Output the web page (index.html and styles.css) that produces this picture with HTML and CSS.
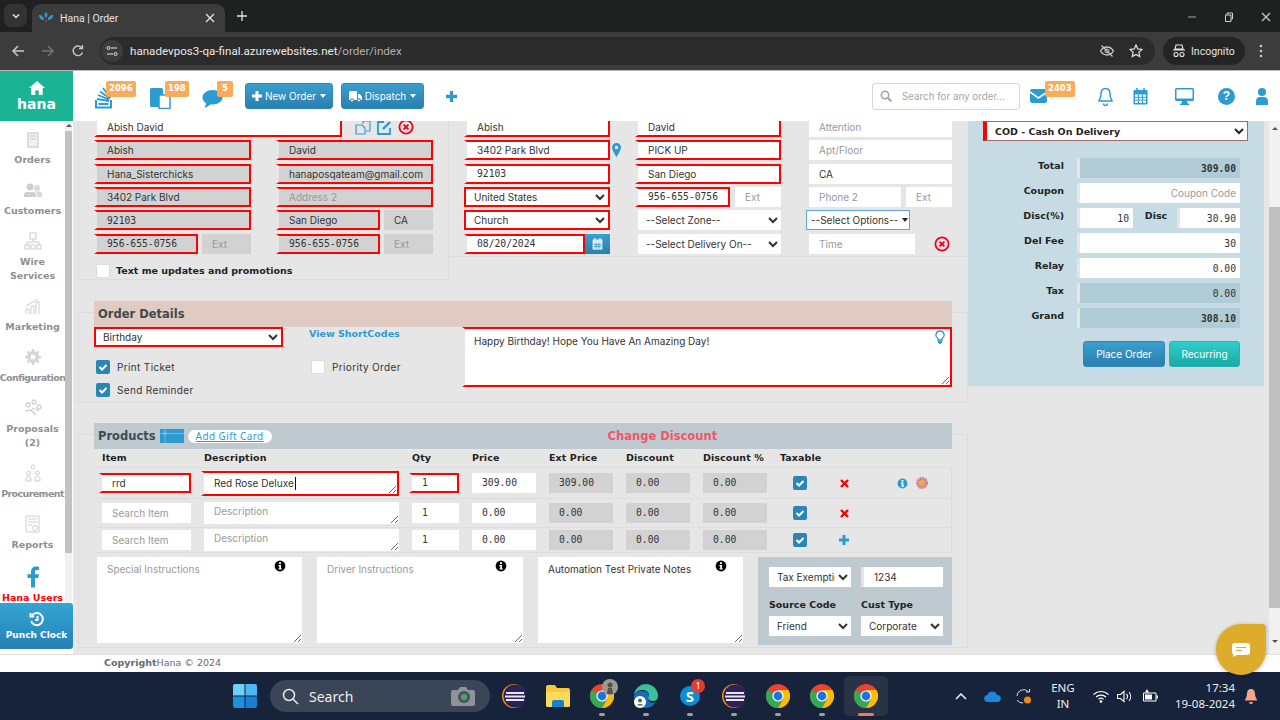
FILE: index.html
```html
<!DOCTYPE html>
<html lang="en">
<head>
<meta charset="UTF-8">
<meta name="viewport" content="width=device-width, initial-scale=1.0">
<title>Hana | Order</title>
<link rel="stylesheet" href="styles.css">
</head>
<body>

<svg class="defs" width="0" height="0">
    <symbol id="chrome" viewBox="0 0 24 24">
        <circle cx="12" cy="12" r="12" fill="#ea4335"/>
        <path d="M12 12 1.6 6A12 12 0 0 0 12 24l5.2-9z" fill="#34a853"/>
        <path d="M12 6h10.4A12 12 0 0 1 12 24l5.2-9z" fill="#fbbc04"/>
        <circle cx="12" cy="12" r="5.6" fill="#fff"/>
        <circle cx="12" cy="12" r="4.4" fill="#1a73e8"/>
    </symbol>
    <symbol id="eclipse" viewBox="0 0 24 24">
        <circle cx="12" cy="12" r="12" fill="#f7941e"/>
        <circle cx="13" cy="12" r="11.5" fill="#2c2255"/>
        <path d="M4 8h18v2H4zM3 11.5h20v2H3zM4 15h18v2H4z" fill="#e8e6f0"/>
    </symbol>
    <symbol id="redx" viewBox="0 0 16 16">
        <circle cx="8" cy="8" r="6.6" fill="none" stroke="#f0001e" stroke-width="1.8"/>
        <path d="m5.6 5.6 4.8 4.8m0-4.8-4.8 4.8" stroke="#f0001e" stroke-width="2"/>
    </symbol>
    <symbol id="tick" viewBox="0 0 14 14">
        <rect width="14" height="14" rx="2" fill="#2a86b6"/>
        <path d="m3.5 7 2.5 2.5 4.5-4.5" fill="none" stroke="#fff" stroke-width="2"/>
    </symbol>
    <symbol id="info" viewBox="0 0 12 12">
        <circle cx="6" cy="6" r="5.4"/>
        <path d="M5 2.2h2v1.8H5zM4.4 5h2.6v3.4h.8v1.2H4.4V8.4h.9V6.2h-.9z" fill="#fff"/>
    </symbol>
</svg>

<div class="tabstrip">
    <div class="tab-search"><svg width="10" height="10" viewBox="0 0 10 10"><path d="m2 3.5 3 3 3-3" fill="none" stroke="#e3e3e3" stroke-width="1.5"/></svg></div>
    <div class="tab">
        <svg width="14" height="12" viewBox="0 0 14 12"><path d="M7 0c2 2 2 4 0 6-2-2-2-4 0-6zM0 3c3 0 5 2 5 5-3 0-5-2-5-5zM14 3c-3 0-5 2-5 5 3 0 5-2 5-5z" fill="#2e9bd0"/><path d="M6 8h2l-1 3z" fill="#d43a3a"/></svg>
        <span class="tab-title">Hana | Order</span>
        <svg width="10" height="10" viewBox="0 0 10 10"><path d="m1 1 8 8m0-8-8 8" stroke="#e3e3e3" stroke-width="1.3"/></svg>
    </div>
    <svg class="tab-new" width="12" height="12" viewBox="0 0 12 12"><path d="M6 1v10M1 6h10" stroke="#e3e3e3" stroke-width="1.3"/></svg>
    <div class="win-btns">
        <svg width="10" height="10" viewBox="0 0 10 10"><path d="M1 5h8" stroke="#8f8f8f" stroke-width="1.2"/></svg>
        <svg width="10" height="10" viewBox="0 0 10 10"><path d="M1.5 3h5.5v6.500H1.500zM3 3V1h5.500v6H7" fill="none" stroke="#cfcfcf"/></svg>
        <svg width="10" height="10" viewBox="0 0 10 10"><path d="m1 1 8 8m0-8-8 8" stroke="#cfcfcf" stroke-width="1.100"/></svg>
    </div>
</div>

<div class="toolbar">
    <svg class="tool" width="14" height="14" viewBox="0 0 14 14"><path d="M13 7H2m5-5L2 7l5 5" fill="none" stroke="#c7c7c7" stroke-width="1.500"/></svg>
    <svg class="tool" width="14" height="14" viewBox="0 0 14 14"><path d="M1 7h11M7 2l5 5-5 5" fill="none" stroke="#757575" stroke-width="1.500"/></svg>
    <svg class="tool" width="14" height="14" viewBox="0 0 14 14"><path d="M11.500 8.500A4.800 4.800 0 1 1 10.500 3.500M11.500 1v3.500H8" fill="none" stroke="#c7c7c7" stroke-width="1.400"/></svg>
    <div class="omnibox">
        <span class="site-info"><svg width="12" height="12" viewBox="0 0 12 12"><path d="M5 3h6M1 9h6" stroke="#e3e3e3"/><circle cx="2.500" cy="3" r="1.500" fill="none" stroke="#e3e3e3"/><circle cx="9.500" cy="9" r="1.500" fill="none" stroke="#e3e3e3"/></svg></span>
        <span class="url">hanadevpos3-qa-final.azurewebsites.net<span class="url-path">/order/index</span></span>
        <svg class="omni-icon" width="16" height="16" viewBox="0 0 16 16"><path d="M1.500 8S4 4 8 4s6.500 4 6.500 4-2.500 4-6.500 4-6.500-4-6.500-4zM2.500 2.500l11 11" fill="none" stroke="#c7c7c7" stroke-width="1.300"/><circle cx="8" cy="8" r="2" fill="none" stroke="#c7c7c7"/></svg>
        <svg class="omni-icon" width="14" height="14" viewBox="0 0 14 14"><path d="m7 1 1.800 3.900 4.200.5-3.100 2.900.8 4.200L7 10.400 3.300 12.500l.8-4.200L1 5.400l4.200-.5z" fill="none" stroke="#e3e3e3" stroke-width="1.200"/></svg>
    </div>
    <div class="incognito">
        <svg width="14" height="14" viewBox="0 0 14 14"><path d="M4 1h6l1 4H3zM1 6h12" fill="none" stroke="#e3e3e3" stroke-width="1.100"/><circle cx="4" cy="10.500" r="2" fill="none" stroke="#e3e3e3" stroke-width="1.100"/><circle cx="10" cy="10.500" r="2" fill="none" stroke="#e3e3e3" stroke-width="1.100"/></svg>
        Incognito
    </div>
    <svg class="tool-menu" width="4" height="14" viewBox="0 0 4 14"><circle cx="2" cy="2" r="1.300" fill="#c7c7c7"/><circle cx="2" cy="7" r="1.300" fill="#c7c7c7"/><circle cx="2" cy="12" r="1.300" fill="#c7c7c7"/></svg>
</div>

<header class="topbar">
    <a class="logo">
        <svg width="16" height="14" viewBox="0 0 16 14"><path d="M8 0 0 7h2.300v7h4V9.500h3.400V14h4V7H16z" fill="#fff"/></svg>
        <span>hana</span>
    </a>
    <div class="top-left">
        <div class="top-icon w-stack">
            <svg width="19" height="24" viewBox="0 0 19 24"><path d="M1 15v7.500h15V15" fill="none" stroke="#2e9bd0" stroke-width="2"/><path d="M3.500 19h10" stroke="#2e9bd0" stroke-width="2"/><path d="m2 14 12 2M3 10l11 4.500M5 6.500l10 7M8 3l7.500 10" fill="none" stroke="#2e9bd0" stroke-width="1.800"/></svg>
            <span class="badge">2096</span>
        </div>
        <div class="top-icon w-docs">
            <svg width="21" height="22" viewBox="0 0 21 22"><rect x="0" y="1" width="13" height="19" rx="1.500" fill="#2e9bd0"/><rect x="9" y="8" width="11" height="13.500" fill="#fff" stroke="#2e9bd0" stroke-width="1.500"/></svg>
            <span class="badge">198</span>
        </div>
        <div class="top-icon w-chat">
            <svg width="21" height="20" viewBox="0 0 21 20"><path d="M10.500 1C5 1 .5 4.300.5 8.500c0 2.400 1.500 4.500 3.800 5.900-.3 1.500-1.200 3-2.300 4 2.500-.2 4.800-1.500 6.300-3 .7.100 1.400.1 2.200.1 5.500 0 10-3.100 10-7S16 1 10.500 1z" fill="#2e9bd0"/></svg>
            <span class="badge">5</span>
        </div>
        <button class="btn-blue btn-new">
            <svg width="10" height="10" viewBox="0 0 10 10"><path d="M3.500 0h3v3.500H10v3H6.500V10h-3V6.500H0v-3h3.500z" fill="#fff"/></svg>
            New Order <i class="caret"></i>
        </button>
        <button class="btn-blue btn-dispatch">
            <svg width="13" height="11" viewBox="0 0 13 11"><path d="M0 1.500Q0 0 1.500 0H8v9H0zM9 3h2l2 3v3H9z" fill="#fff"/><circle cx="3" cy="9.300" r="1.600" fill="#fff" stroke="#2a86b6"/><circle cx="10" cy="9.300" r="1.600" fill="#fff" stroke="#2a86b6"/></svg>
            Dispatch <i class="caret"></i>
        </button>
        <svg class="top-plus" width="11" height="11" viewBox="0 0 10 10"><path d="M3.500 0h3v3.500H10v3H6.500V10h-3V6.500H0v-3h3.500z" fill="#2e9bd0"/></svg>
    </div>
    <div class="top-right">
        <div class="top-search">
            <svg width="12" height="12" viewBox="0 0 12 12"><circle cx="5" cy="5" r="3.700" fill="none" stroke="#a0a0a0" stroke-width="1.500"/><path d="m8 8 3.300 3.300" stroke="#a0a0a0" stroke-width="2"/></svg>
            <span>Search for any order...</span>
        </div>
        <div class="top-icon w-mail">
            <svg width="17" height="14" viewBox="0 0 17 14"><path d="M0 2 Q0 0 2 0H15Q17 0 17 2L8.500 8z" fill="#2e9bd0"/><path d="M0 4 8.500 10 17 4v8q0 2-2 2H2q-2 0-2-2z" fill="#2e9bd0"/></svg>
            <span class="badge">2403</span>
        </div>
        <svg class="i-bell" width="15" height="19" viewBox="0 0 15 19"><path d="M7.500 1.500C4.500 1.500 3 4 3 7c0 4-2 6-2 7h13c0-1-2-3-2-7 0-3-1.500-5.500-4.500-5.500z" fill="none" stroke="#2e9bd0" stroke-width="1.500"/><path d="M5.500 16.500a2 2 0 0 0 4 0" fill="none" stroke="#2e9bd0" stroke-width="1.500"/></svg>
        <svg class="i-cal" width="15" height="17" viewBox="0 0 15 17"><rect x=".5" y="2" width="14" height="14.500" rx="1" fill="#2e9bd0"/><path d="M2 6.500h11v8.500H2z" fill="#fff"/><path d="M5.500 6.500V15M9.500 6.500V15M2 9.300h11M2 12.100h11" stroke="#2e9bd0"/><path d="M4 0v3.500M11 0v3.500" stroke="#2e9bd0" stroke-width="1.500"/></svg>
        <svg class="i-mon" width="19" height="17" viewBox="0 0 19 17"><path d="M1.500 0h16Q19 0 19 1.500v10Q19 13 17.500 13H12l.5 2.500H14V17H5v-1.500h1.500L7 13H1.500Q0 13 0 11.500v-10Q0 0 1.500 0zM1.500 1.500v9h16v-9z" fill="#2e9bd0" fill-rule="evenodd"/></svg>
        <span class="i-help">?</span>
        <svg class="i-user" width="12" height="17" viewBox="0 0 12 17"><circle cx="6" cy="4" r="4" fill="#2e9bd0"/><path d="M0 17v-3.500Q0 9 4 9h4q4 0 4 4.500V17z" fill="#2e9bd0"/></svg>
    </div>
</header>

<div class="app">
    <aside class="sidebar">
        <nav class="side-nav">
            <a class="nav-item"><svg width="14" height="18" viewBox="0 0 14 18"><path d="M2 3h10v14H2z" fill="#f2f2f2" stroke="#d4d4d4" stroke-width="1.500"/><path d="M4 6h6M4 9h6" stroke="#d4d4d4" stroke-width="1.500"/></svg><span>Orders</span></a>
            <a class="nav-item"><svg width="18" height="14" viewBox="0 0 18 14"><circle cx="6" cy="4" r="3.500" fill="#cfcfcf"/><circle cx="13" cy="5" r="3" fill="#dadada"/><path d="M0 14v-2q0-3 3-3h6q3 0 3 3v2z" fill="#cfcfcf"/><path d="M13 14v-2q0-2-1.500-3.500H15q3 0 3 2.500v3z" fill="#dadada"/></svg><span>Customers</span></a>
            <a class="nav-item nav-two"><svg width="18" height="18" viewBox="0 0 18 18" fill="none" stroke="#cccccc"><rect x="6" y="1" width="6" height="6"/><path d="M9 7v3M3 13v-3h12v3"/><rect x="1" y="13" width="4" height="4"/><rect x="7" y="13" width="4" height="4"/><rect x="13" y="13" width="4" height="4"/></svg><span>Wire<br>Services</span></a>
            <a class="nav-item"><svg width="16" height="18" viewBox="0 0 16 18" fill="none" stroke="#cfcfcf"><path d="M1 17v-5h3v5M6 17V9h3v8M11 17V5h3v12M1 9l12-7"/></svg><span>Marketing</span></a>
            <a class="nav-item nav-tight"><svg width="16" height="18" viewBox="0 0 16 16"><path d="M7 0h2l.4 2.200 1.600.7L13 1.700 14.300 3 13 5l.7 1.600 2.300.4v2l-2.300.4L13 11l1.300 2-1.300 1.300-2-1.300-1.600.7L9 16H7l-.4-2.300L5 13l-2 1.300L1.700 13 3 11l-.7-1.600L0 9V7l2.300-.4L3 5 1.700 3 3 1.700l2 1.300 1.600-.7z" fill="#d6d6d6"/><circle cx="8" cy="8" r="2.500" fill="#fff"/></svg><span>Configuration</span></a>
            <a class="nav-item nav-two"><svg width="18" height="18" viewBox="0 0 18 18" fill="none" stroke="#cfcfcf" stroke-width="1.300"><circle cx="4" cy="6" r="2"/><circle cx="10" cy="3" r="2"/><circle cx="15" cy="8" r="2"/><path d="M1 12l6-1 5 5M8 9l7 3"/></svg><span>Proposals<br>(2)</span></a>
            <a class="nav-item nav-tight"><svg width="16" height="18" viewBox="0 0 16 18" fill="none" stroke="#cfcfcf"><circle cx="8" cy="3" r="2"/><circle cx="3.500" cy="9" r="2"/><circle cx="12.500" cy="9" r="2"/><path d="M1 17v-3l2-2h1l2 2v3zM10 17v-3l2-2h1l2 2v3z"/></svg><span>Procurement</span></a>
            <a class="nav-item"><svg width="15" height="18" viewBox="0 0 15 18" fill="none" stroke="#d0d0d0"><path d="M1 1h13v16H1zM3 4h9M3 7h9M3 10h4"/><circle cx="10" cy="13" r="2.500"/></svg><span>Reports</span></a>
            <a class="nav-item nav-fb"><svg width="12" height="21" viewBox="0 0 12 21"><path d="M8 21V11.500h3.300l.5-3.700H8V5.400C8 4.300 8.300 3.600 9.900 3.600H12V.2C11.600.1 10.400 0 9 0 6 0 4 1.800 4 5.100v2.700H.500v3.700H4V21z" fill="#2e9bd0"/></svg><span>Hana Users</span></a>
            <div class="side-scroll"><i class="arrow-up"></i><div class="side-thumb"></div></div>
        </nav>
        <button class="punch">
            <svg width="16" height="15" viewBox="0 0 16 15" fill="none" stroke="#fff" stroke-width="2"><path d="M3 3.500A6 6 0 1 1 2.100 9"/><path d="M1.500 1v3.500H5M8.500 4v4H6"/></svg>
            Punch Clock
        </button>
    </aside>

    <main class="content">
        <div class="form-area">
            <section class="customer">
                <div class="cust-left">
                    <div class="name-row">
                        <input class="field bad" value="Abish David">
                        <svg width="16" height="15" viewBox="0 0 16 15" fill="none" stroke="#3a9dcb" stroke-width="1.200"><path d="M8 4V1h7v10h-4M1 5h6l3 3v6H1z"/></svg>
                        <svg width="15" height="15" viewBox="0 0 15 15" fill="none" stroke="#2e9bd0" stroke-width="1.800"><path d="M7 2H1v12h12V8"/><path d="m6 9 7-7" stroke-width="2.400"/></svg>
                        <svg width="16" height="16"><use href="#redx"/></svg>
                    </div>
                    <div class="cust-grid">
                        <input class="field bad ro" value="Abish">
                        <input class="field bad ro" value="David">
                        <input class="field bad ro" value="Hana_Sisterchicks">
                        <input class="field bad ro" value="hanaposqateam@gmail.com">
                        <input class="field bad ro" value="3402 Park Blvd">
                        <input class="field bad ro" placeholder="Address 2">
                        <input class="field bad ro num" value="92103">
                        <div class="pair"><input class="field bad ro" value="San Diego"><input class="field ro" value="CA"></div>
                        <div class="pair"><input class="field bad ro num" value="956-655-0756"><input class="field ro" placeholder="Ext"></div>
                        <div class="pair"><input class="field bad ro num" value="956-655-0756"><input class="field ro" placeholder="Ext"></div>
                    </div>
                    <label class="text-me"><i class="box"></i>Text me updates and promotions</label>
                </div>
                <div class="cust-right">
                    <input class="field bad" value="Abish">
                    <input class="field bad" value="David">
                    <input class="field" placeholder="Attention">

                    <div class="with-pin">
                        <input class="field bad" value="3402 Park Blvd">
                        <svg width="9" height="14" viewBox="0 0 9 14"><path fill-rule="evenodd" d="M4.500 0a4.500 4.500 0 0 1 4.500 4.500C9 7.500 4.500 14 4.500 14S0 7.500 0 4.500A4.500 4.500 0 0 1 4.500 0zm0 2.700a1.800 1.800 0 1 0 0 3.600 1.800 1.800 0 0 0 0-3.600z" fill="#2e9bd0"/></svg>
                    </div>
                    <input class="field bad" value="PICK UP">
                    <input class="field" placeholder="Apt/Floor">

                    <input class="field bad num" value="92103">
                    <input class="field bad" value="San Diego">
                    <input class="field" value="CA">

                    <select class="sel bad-sel"><option>United States</option></select>
                    <div class="pair"><input class="field bad num" value="956-655-0756"><input class="field" placeholder="Ext"></div>
                    <div class="pair"><input class="field" placeholder="Phone 2"><input class="field" placeholder="Ext"></div>

                    <select class="sel bad-sel"><option>Church</option></select>
                    <select class="sel inset"><option>--Select Zone--</option></select>
                    <div class="opt-cell"><button class="opt-btn">--Select Options-- <i class="caret dark"></i></button></div>

                    <div class="date-cell">
                        <input class="field bad num" value="08/20/2024">
                        <span class="cal-btn"><svg width="11" height="12" viewBox="0 0 15 17"><rect x=".5" y="2" width="14" height="14.500" fill="#d9eef8"/><path d="M5.500 6.500V15M9.500 6.500V15M2 9.300h11M2 12.100h11" stroke="#2a86b6"/><path d="M4 0v3.500M11 0v3.500" stroke="#d9eef8" stroke-width="2"/></svg></span>
                    </div>
                    <select class="sel inset"><option>--Select Delivery On--</option></select>
                    <div class="time-cell">
                        <input class="field" placeholder="Time">
                        <svg width="16" height="16"><use href="#redx"/></svg>
                    </div>
                </div>
            </section>

            <section class="box-section order-details">
                <h3 class="band band-order">Order Details</h3>
                <div class="order-body">
                    <div class="order-left">
                        <select class="sel bad-sel occasion"><option>Birthday</option></select>
                        <a class="shortcodes">View ShortCodes</a>
                        <label class="chk"><svg width="14" height="14"><use href="#tick"/></svg>Print Ticket</label>
                        <label class="chk"><i class="box"></i>Priority Order</label>
                        <label class="chk"><svg width="14" height="14"><use href="#tick"/></svg>Send Reminder</label>
                    </div>
                    <div class="message-wrap">
                        <textarea class="message">Happy Birthday! Hope You Have An Amazing Day!</textarea>
                        <svg class="bulb" width="10" height="14" viewBox="0 0 10 14"><path d="M5 1a4 4 0 0 0-2 7.500V10h4V8.500A4 4 0 0 0 5 1z" fill="#fff" stroke="#2e9bd0" stroke-width="1.300"/><path d="M3 11h4v1.500L5.500 14h-1L3 12.500z" fill="#2e9bd0"/></svg>
                    </div>
                </div>
            </section>

            <section class="box-section products">
                <div class="band band-products">
                    <h3>Products</h3>
                    <svg class="gift" width="24" height="14" viewBox="0 0 24 14"><rect width="24" height="14" fill="#2e9bd0"/><path d="M0 4.500h24M5 0v14" stroke="#86c6e6" stroke-width=".7"/><circle cx="5" cy="4.500" r="1.500" fill="none" stroke="#86c6e6" stroke-width=".7"/></svg>
                    <a class="gift-link">Add Gift Card</a>
                    <span class="change-disc">Change Discount</span>
                </div>
                <div class="prod-head prod-grid">
                    <span>Item</span><span>Description</span><span>Qty</span><span>Price</span><span>Ext Price</span><span>Discount</span><span>Discount %</span><span>Taxable</span>
                </div>
                <div class="prod-row prod-grid first">
                    <input class="field bad" value="rrd">
                    <div class="desc-cell"><textarea class="desc bad">Red Rose Deluxe</textarea><i class="caret-line"></i></div>
                    <input class="field bad qty num" value="1">
                    <input class="field num" value="309.00">
                    <input class="field ro num" value="309.00">
                    <input class="field ro num" value="0.00">
                    <input class="field ro num" value="0.00">
                    <svg class="tax-box" width="14" height="14"><use href="#tick"/></svg>
                    <svg class="row-act" width="9" height="9" viewBox="0 0 9 9"><path d="m1 1 7 7m0-7-7 7" stroke="#f00000" stroke-width="2.400"/></svg>
                    <div class="row-extra">
                        <svg width="11" height="11" fill="#2e9bd0"><use href="#info"/></svg>
                        <svg width="12" height="12" viewBox="0 0 12 12"><circle cx="6" cy="6" r="4.500" fill="#e3b23c" stroke="#d77aa0" stroke-width="3" stroke-dasharray="2 .6"/></svg>
                    </div>
                </div>
                <div class="prod-row prod-grid">
                    <input class="field" placeholder="Search Item">
                    <textarea class="desc" placeholder="Description"></textarea>
                    <input class="field qty num" value="1">
                    <input class="field num" value="0.00">
                    <input class="field ro num" value="0.00">
                    <input class="field ro num" value="0.00">
                    <input class="field ro num" value="0.00">
                    <svg class="tax-box" width="14" height="14"><use href="#tick"/></svg>
                    <svg class="row-act" width="9" height="9" viewBox="0 0 9 9"><path d="m1 1 7 7m0-7-7 7" stroke="#f00000" stroke-width="2.400"/></svg>
                </div>
                <div class="prod-row prod-grid last">
                    <input class="field" placeholder="Search Item">
                    <textarea class="desc" placeholder="Description"></textarea>
                    <input class="field qty num" value="1">
                    <input class="field num" value="0.00">
                    <input class="field ro num" value="0.00">
                    <input class="field ro num" value="0.00">
                    <input class="field ro num" value="0.00">
                    <svg class="tax-box" width="14" height="14"><use href="#tick"/></svg>
                    <svg class="row-act" width="10" height="10" viewBox="0 0 10 10"><path d="M3.500 0h3v3.500H10v3H6.500V10h-3V6.500H0v-3h3.500z" fill="#2e9bd0"/></svg>
                </div>
                <div class="notes-row">
                    <div class="note"><textarea placeholder="Special Instructions"></textarea><svg width="12" height="12" fill="#000"><use href="#info"/></svg></div>
                    <div class="note"><textarea placeholder="Driver Instructions"></textarea><svg width="12" height="12" fill="#000"><use href="#info"/></svg></div>
                    <div class="note"><textarea>Automation Test Private Notes</textarea><svg width="12" height="12" fill="#000"><use href="#info"/></svg></div>
                    <div class="tax-panel">
                        <select class="sel"><option>Tax Exemption</option></select>
                        <input class="field" value="1234">
                        <label>Source Code</label>
                        <label>Cust Type</label>
                        <select class="sel"><option>Friend</option></select>
                        <select class="sel"><option>Corporate</option></select>
                    </div>
                </div>
            </section>
        </div>

        <aside class="pay-panel">
            <select class="pay-select"><option>COD - Cash On Delivery</option></select>
            <div class="totals">
                <label>Total</label><input class="field calc num strong" value="309.00">
                <label>Coupon</label><input class="field" placeholder="Coupon Code">
                <label>Disc(%)</label>
                <div class="disc-pair"><input class="field num" value="10"><label>Disc</label><input class="field num" value="30.90"></div>
                <label>Del Fee</label><input class="field num" value="30">
                <label>Relay</label><input class="field num" value="0.00">
                <label>Tax</label><input class="field calc num" value="0.00">
                <label>Grand</label><input class="field calc num strong" value="308.10">
            </div>
            <div class="pay-btns">
                <button class="btn-blue place">Place Order</button>
                <button class="btn-teal">Recurring</button>
            </div>
        </aside>

        <div class="page-scroll"><i class="arrow-up"></i><div class="page-thumb"></div><i class="arrow-down"></i></div>
    </main>
</div>

<footer class="copyright"><b>Copyright</b>Hana © 2024</footer>

<div class="chat-bubble">
    <svg width="18" height="14" viewBox="0 0 18 14"><path d="M3 0h12q3 0 3 3v6q0 3-3 3H5l-4 2 .3-2.600Q0 10.500 0 9V3q0-3 3-3z" fill="#fff"/><path d="M4 4.500h10M4 7.500h6" stroke="#dcac2a" stroke-width="1.200"/></svg>
</div>

<div class="taskbar">
    <svg class="win-logo" width="24" height="24" viewBox="0 0 24 24"><path d="M0 2q0-2 2-2h9.500v11.500H0z" fill="#6fd0f8"/><path d="M12.500 0H22q2 0 2 2v9.500H12.500z" fill="#4db8f0"/><path d="M0 12.500h11.500V24H2q-2 0-2-2z" fill="#1e90e0"/><path d="M12.500 12.500H24V22q0 2-2 2h-9.500z" fill="#1a7fd0"/></svg>
    <div class="tb-search">
        <svg width="17" height="17" viewBox="0 0 17 17"><circle cx="7" cy="7" r="5.500" fill="none" stroke="#e8e8e8" stroke-width="1.500"/><path d="m11 11 5 5" stroke="#e8e8e8" stroke-width="1.500"/></svg>
        <span>Search</span>
        <svg class="tb-cam" width="24" height="20" viewBox="0 0 24 20"><path d="M2 4h5l2-3h6l2 3h5q2 0 2 2v12q0 2-2 2H2q-2 0-2-2V6q0-2 2-2z" fill="#8d939a"/><circle cx="13" cy="11" r="6" fill="#4b5157"/><circle cx="13" cy="11" r="3.200" fill="#4aa06c"/></svg>
    </div>
    <div class="tb-apps">
        <span class="app-slot"><svg width="24" height="24"><use href="#eclipse"/></svg></span>
        <span class="app-slot"><svg width="24" height="22" viewBox="0 0 24 22"><path d="M0 2q0-2 2-2h7l2 3h11q2 0 2 2v15q0 2-2 2H2q-2 0-2-2z" fill="#f8c83c"/><path d="M0 7h24v13q0 2-2 2H2q-2 0-2-2z" fill="#fcdb5c"/><path d="M8 15h8q2 0 2 2v5H6v-5q0-2 2-2z" fill="#1582cc"/></svg></span>
        <span class="app-slot open"><svg width="24" height="24"><use href="#chrome"/></svg><svg class="avatar" width="16" height="16" viewBox="0 0 16 16"><circle cx="8" cy="8" r="8" fill="#9a9a90"/><circle cx="8" cy="6" r="2.500" fill="#54504a"/><path d="M5 15l1-6h4l1 6z" fill="#54504a"/></svg></span>
        <span class="app-slot open"><svg width="24" height="24" viewBox="0 0 24 24"><path d="M12 0a12 12 0 0 1 12 12c0 3-2 5-5 5s-5-1-5-3c0-1 1-1.500 1-3 0-3-3-5-7-5-3 0-6 1.500-8 5A12 12 0 0 1 12 0z" fill="#38c09a"/><path d="M0 12c2-4 5-5 8-5 5 0 7 3 7 5 0 1-1 1.500-1 3s2 4 5 4c1 0 1.500-.2 2.500-.5A12 12 0 0 1 12 24 12 12 0 0 1 0 12z" fill="#1a6cc0"/><circle cx="6" cy="18" r="6" fill="#fff"/><circle cx="6" cy="16.500" r="2" fill="#566"/><path d="M2.500 21.500q3.500-3.500 7 0z" fill="#566"/></svg></span>
        <span class="app-slot open"><svg width="22" height="22" viewBox="0 0 22 22"><circle cx="11" cy="11" r="10" fill="#0b8dd8"/><text x="11" y="16.500" text-anchor="middle" class="skype-s">S</text></svg><i class="notif">1</i></span>
        <span class="app-slot open"><svg width="24" height="24"><use href="#eclipse"/></svg></span>
        <span class="app-slot open"><svg width="24" height="24"><use href="#chrome"/></svg></span>
        <span class="app-slot open"><svg width="24" height="24"><use href="#chrome"/></svg></span>
        <span class="app-slot active"><svg width="24" height="24"><use href="#chrome"/></svg></span>
    </div>
    <div class="tray">
        <svg class="t-up" width="12" height="7" viewBox="0 0 12 7"><path d="m1 6 5-5 5 5" fill="none" stroke="#f0f0f0" stroke-width="1.500"/></svg>
        <svg class="t-cloud" width="17" height="11" viewBox="0 0 17 11"><path d="M4 11a3.500 3.500 0 0 1-.5-7A5 5 0 0 1 13 4a3.500 3.500 0 0 1 .5 7z" fill="#1c86dc"/></svg>
        <svg class="t-sync" width="17" height="17" viewBox="0 0 17 17"><path d="M2 8a6.500 6.500 0 0 1 11-4.500M14.500 1v3H11M2 12a6.500 6.500 0 0 0 6 3" fill="none" stroke="#d8d8d8"/><circle cx="12.500" cy="12" r="3.500" fill="#f08a10"/></svg>
        <span class="lang">ENG<br>IN</span>
        <svg class="t-wifi" width="16" height="13" viewBox="0 0 16 13" fill="none" stroke="#fff" stroke-width="1.100"><path d="M.5 4.500a11 11 0 0 1 15 0M3 7a7.500 7.500 0 0 1 10 0M5.500 9.300a3.700 3.700 0 0 1 5 0"/><circle cx="8" cy="11.500" r=".8" fill="#fff"/></svg>
        <svg class="t-vol" width="16" height="13" viewBox="0 0 16 13" fill="none" stroke="#fff" stroke-width="1.100"><path d="M.5 4.500h3l3.500-3v10l-3.500-3h-3zM9.500 4a3.500 3.500 0 0 1 0 5M12 2a7 7 0 0 1 0 9"/></svg>
        <svg class="t-bat" width="17" height="14" viewBox="0 0 17 14"><path d="M1.500 4H14v8H1.500z" fill="none" stroke="#fff"/><path d="M14.500 6.500H16v3h-1.500z" fill="#fff"/><path d="M3 5.500h7v5H3zM5 0 3 3.500h4z" fill="#fff"/></svg>
        <span class="clock">17:34<br>19-08-2024</span>
        <svg class="t-bell" width="14" height="17" viewBox="0 0 14 17"><path d="M7 1C4 1 3 3.500 3 6c0 3-2 5-2 6.500h12C13 11 11 9 11 6c0-2.500-1-5-4-5z" fill="#f2a58a"/><path d="M5 14h4q0 2-2 2t-2-2z" fill="#f2a58a"/></svg>
    </div>
</div>

</body>
</html>
```

FILE: styles.css
```css
* {
    box-sizing: border-box;
}
html, body {
    margin: 0;
    height: 100%;
    overflow: hidden;
}
body {
    width: 1280px;
    height: 720px;
    display: flex;
    flex-direction: column;
    position: relative;
    font-family: Inter, "Noto Sans", Arial, sans-serif;
    font-size: 10px;
    color: #333;
    background: #e6e6e6;
}
.defs {
    position: absolute;
}
input, select, textarea, button {
    font-family: Inter, "Noto Sans", Arial, sans-serif;
    font-size: 10px;
    color: #333;
}
::placeholder {
    color: #999;
    opacity: 1;
}

/* browser top */
.tabstrip {
    height: 32px;
    background: #1f2020;
    display: flex;
    align-items: flex-end;
    flex: none;
    color: #e3e3e3;
    font: 10.500px Roboto, sans-serif;
}
.tab-search {
    width: 23px;
    height: 23px;
    margin: 0 5px 5px 4px;
    background: #333;
    border-radius: 7px;
    display: flex;
    align-items: center;
    justify-content: center;
}
.tab {
    width: 193px;
    height: 28px;
    background: #3c3c3c;
    border-radius: 9px 9px 0 0;
    display: flex;
    align-items: center;
    padding: 0 10px 0 7px;
    gap: 7px;
}
.tab-title {
    flex: 1;
}
.tab-new {
    margin: 0 0 10px 11px;
}
.win-btns {
    margin-left: auto;
    display: flex;
    gap: 27px;
    padding: 0 9px 10px 0;
}
.toolbar {
    height: 39px;
    background: #3c3c3c;
    display: flex;
    align-items: center;
    flex: none;
    color: #e3e3e3;
    padding: 0 0 0 11px;
    border-bottom: 1px solid #b8b8b8;
    font-family: Roboto, sans-serif;
}
.tool {
    margin-right: 16px;
}
.omnibox {
    width: 1055px;
    height: 28px;
    margin-left: -1px;
    background: #2b2b2b;
    border-radius: 14px;
    display: flex;
    align-items: center;
    padding: 0 12px 0 1px;
}
.site-info {
    width: 22px;
    height: 22px;
    background: #3c3c3c;
    border-radius: 50%;
    display: flex;
    align-items: center;
    justify-content: center;
    margin-right: 7px;
}
.url {
    flex: 1;
    font-size: 11.600px;
    color: #e8e8e8;
}
.url-path {
    color: #b0b0b0;
}
.omni-icon {
    margin-left: 14px;
}
.incognito {
    width: 82px;
    height: 28px;
    margin-left: 8px;
    background: #242424;
    border-radius: 14px;
    display: flex;
    align-items: center;
    gap: 5px;
    padding-left: 9px;
    font-size: 10.500px;
}
.tool-menu {
    margin-left: 14px;
}

/* app header */
.topbar {
    height: 50px;
    background: #fff;
    display: flex;
    align-items: center;
    flex: none;
    position: relative;
}
.logo {
    width: 73px;
    height: 50px;
    background: #1ab394;
    color: #fff;
    font: bold 14px "DejaVu Sans", sans-serif;
    display: flex;
    flex-direction: column;
    align-items: center;
    justify-content: center;
    gap: 1px;
}
.top-left {
    display: flex;
    align-items: center;
    padding-left: 22px;
}
.top-icon {
    position: relative;
    display: flex;
    align-items: flex-end;
    height: 30px;
    padding-bottom: 2px;
}
.w-stack { width: 55px; }
.w-docs { width: 52px; }
.w-chat { width: 43px; }
.w-mail { width: 68px; margin-left: 10px; padding-bottom: 8px; }
.badge {
    position: absolute;
    top: 0;
    background: #f8ac59;
    color: #fff;
    font: bold 8.500px "DejaVu Sans", sans-serif;
    padding: 2px 3px 4px;
    border-radius: 2px;
    min-height: 16px;
}
.w-stack .badge { left: 11px; }
.w-docs .badge { left: 15px; }
.w-chat .badge { left: 15px; padding: 2px 5px 4px; }
.w-mail .badge { left: 15px; }
.btn-blue {
    background: linear-gradient(#3a9fce, #2a7fae);
    border: 1px solid #2c88b8;
    border-radius: 3px;
    color: #fff;
    padding: 0;
}
.btn-new, .btn-dispatch {
    height: 26px;
    display: flex;
    align-items: center;
    justify-content: center;
    gap: 3px;
    color: #fff;
}
.btn-new {
    width: 88px;
}
.btn-dispatch {
    width: 83px;
    margin-left: 8px;
}
.caret {
    display: inline-block;
    width: 0;
    height: 0;
    border-left: 3.500px solid transparent;
    border-right: 3.500px solid transparent;
    border-top: 4px solid #fff;
    margin-left: 1px;
}
.caret.dark {
    border-top-color: #222;
}
.top-plus {
    margin-left: 22px;
}
.top-right {
    margin-left: auto;
    display: flex;
    align-items: center;
    padding-right: 12px;
}
.top-search {
    width: 148px;
    height: 27px;
    border: 1px solid #d5d5d5;
    border-radius: 3px;
    display: flex;
    align-items: center;
    gap: 10px;
    padding-left: 7px;
    color: #a5a5a5;
    font-size: 9.800px;
}
.i-bell { margin-right: 20px; }
.i-cal { margin-right: 27px; }
.i-mon { margin-right: 24px; }
.i-help {
    width: 17px;
    height: 17px;
    border-radius: 50%;
    background: #2e9bd0;
    color: #fff;
    font: bold 12px/17px "Liberation Sans", sans-serif;
    text-align: center;
    margin-right: 21px;
}

/* main area */
.app {
    flex: 1;
    display: flex;
    min-height: 0;
}
.sidebar {
    width: 73px;
    background: #fff;
    display: flex;
    flex-direction: column;
    flex: none;
    padding-bottom: 5px;
}
.side-nav {
    flex: 1;
    position: relative;
    overflow: hidden;
    padding: 6px 8px 0 0;
}
.side-scroll {
    position: absolute;
    top: 0;
    bottom: 0;
    right: 1px;
    width: 7px;
    background: #f1f1f1;
}
.side-thumb {
    position: absolute;
    top: 10px;
    width: 100%;
    height: 422px;
    background: #c2c2c2;
}
.side-scroll .arrow-up {
    margin: 3px 1px 0;
}
.arrow-up, .arrow-down {
    display: block;
    width: 0;
    height: 0;
    border-left: 3px solid transparent;
    border-right: 3px solid transparent;
}
.arrow-up {
    border-bottom: 3px solid #555;
}
.arrow-down {
    border-top: 3px solid #555;
}
.nav-item {
    display: flex;
    flex-direction: column;
    align-items: center;
    height: 51px;
    padding-top: 1px;
    font: bold 9.500px/14px "DejaVu Sans", sans-serif;
    color: #8f8f8f;
    text-align: center;
    white-space: nowrap;
}
.nav-item svg {
    height: 22px;
    margin-bottom: 3px;
    flex: none;
}
.nav-two {
    height: 65px;
}
.nav-tight {
    letter-spacing: -.6px;
}
.nav-fb {
    color: #f00;
    padding-top: 3px;
    height: 40px;
}
.nav-fb svg {
    margin-bottom: 3px;
}
.punch {
    height: 46px;
    background: linear-gradient(#35a5d3, #2480b6);
    border: 0;
    border-radius: 0 3px 3px 0;
    color: #fff;
    font: bold 9px "DejaVu Sans", sans-serif;
    display: flex;
    flex-direction: column;
    align-items: center;
    justify-content: center;
    gap: 3px;
    padding: 0;
}
.content {
    flex: 1;
    display: flex;
    position: relative;
    overflow: hidden;
    padding-left: 5px;
}
.form-area {
    width: 890px;
    flex: none;
    margin-top: -4px;
}

/* inputs */
.field {
    width: 100%;
    height: 20px;
    min-width: 0;
    border: 0;
    border-left: 3px solid #e5e5e5;
    background: #fff;
    padding: 0 4px 0 10px;
    outline: none;
    border-radius: 0;
}
.num {
    font-family: "DejaVu Sans Mono", monospace;
    font-size: 9.700px;
}
.field.bad, .desc.bad {
    border: 2px solid #f00;
    border-left: 3px solid #e6e6e6;
}
.field.ro {
    background: #d2d2d2;
}
.field.ro:not(.bad) {
    border-left: 0;
}
.sel {
    width: 100%;
    height: 20px;
    min-width: 0;
    border: 0;
    background: #fff;
    padding: 0 0 0 4px;
    border-radius: 0;
    outline: none;
}
.sel.inset {
    width: calc(100% - 3px);
    margin-left: 3px;
}
.bad-sel {
    border: 2px solid #f00;
    padding-left: 4px;
}
.pair {
    display: flex;
    gap: 4px;
}
.pair .field:first-child {
    flex: 1;
}
.pair .field:last-child {
    width: 49px;
    flex: none;
}

/* customer block */
.customer {
    display: flex;
    align-items: flex-start;
}
.cust-left {
    width: 371px;
    padding: 0 15px;
    border: 1px solid #dcdcdc;
    border-top: 0;
    height: 163px;
    flex: none;
}
.name-row {
    display: flex;
    align-items: center;
    margin-bottom: 3.300px;
    height: 20px;
}
.name-row .field {
    width: 248px;
    margin-right: 13px;
}
.name-row svg {
    margin-right: 6px;
    flex: none;
}
.cust-grid {
    display: grid;
    grid-template-columns: 157px 157px;
    column-gap: 25px;
    row-gap: 3.330px;
}
.text-me {
    display: flex;
    align-items: center;
    gap: 6px;
    margin: 10px 0 0 2px;
    font: bold 9.500px "DejaVu Sans", sans-serif;
    color: #222;
}
.box {
    display: block;
    width: 14px;
    height: 14px;
    background: #fff;
    border: 1px solid #ddd;
    border-radius: 2px;
    flex: none;
}
.cust-right {
    flex: 1;
    height: 140px;
    border-bottom: 1px solid #dcdcdc;
    padding-left: 15px;
    display: grid;
    grid-template-columns: repeat(3, 146px);
    grid-auto-rows: 20px;
    column-gap: 25px;
    row-gap: 3.330px;
}
.cust-right .pair {
    gap: 2px;
}
.with-pin {
    position: relative;
}
.with-pin svg {
    position: absolute;
    left: 148px;
    top: 3px;
}
.opt-btn {
    width: 104px;
    height: 20px;
    background: #fff;
    border: 1px solid #5aa9d6;
    padding: 0 4px;
    white-space: nowrap;
    display: flex;
    align-items: center;
    gap: 3px;
}
.date-cell {
    display: flex;
}
.date-cell .field {
    flex: 1;
}
.cal-btn {
    width: 25px;
    flex: none;
    background: linear-gradient(#3a9fce, #2a7fae);
    display: flex;
    align-items: center;
    justify-content: center;
}
.time-cell {
    display: flex;
    align-items: center;
    justify-content: space-between;
    padding-right: 2px;
}
.time-cell .field {
    width: 109px;
}

/* sections */
.box-section {
    border: 1px solid #dcdcdc;
    padding: 0 15px;
}
.band {
    height: 26px;
    margin: -12px 0 0;
    font: bold 11.500px "DejaVu Sans", sans-serif;
    color: #3f4a4e;
    padding-left: 4px;
    display: flex;
    align-items: center;
}
.band h3 {
    font: inherit;
    margin: 0;
}
.band-order {
    background: #dfcbc2;
}
.band-products {
    background: #bfcad0;
}
.order-details {
    height: 91px;
    margin-top: 32px;
}
.order-body {
    display: grid;
    grid-template-columns: 368px 490px;
}
.order-left {
    display: grid;
    grid-template-columns: 215px 1fr;
    grid-template-rows: 20px 27px 23px;
    align-items: center;
}
.occasion {
    width: 189px;
    padding-left: 3px;
}
.shortcodes {
    font: bold 9.500px "DejaVu Sans", sans-serif;
    color: #2e9bd0;
    align-self: start;
    margin-top: 1px;
}
.chk {
    display: flex;
    align-items: center;
    gap: 7px;
    padding-left: 2px;
    align-self: end;
    letter-spacing: .35px;
}
.message-wrap {
    position: relative;
}
.message {
    width: 100%;
    height: 60px;
    border: 2px solid #f00;
    border-left: 3px solid #e6e6e6;
    padding: 6px 9px;
    display: block;
    outline: none;
}
.bulb {
    position: absolute;
    top: 3px;
    right: 7px;
}
.products {
    margin-top: 31px;
    height: 214px;
}
.gift {
    margin: 0 4px;
}
.gift-link {
    background: #fff;
    border-radius: 7px;
    padding: 0 8px;
    color: #2e9bd0;
    text-decoration: underline;
    font: 400 10px/13px "Noto Sans", sans-serif;
    letter-spacing: .4px;
}
.change-disc {
    color: #f0566a;
    margin-left: 336px;
}
.prod-grid {
    display: grid;
    grid-template-columns: 89px 195px 47px 64px 64px 64px 64px 40px 22px 1fr;
    column-gap: 13px;
    align-items: center;
    padding-left: 8px;
}
.prod-head {
    height: 18px;
    padding-bottom: 2px;
    font: bold 9.500px "DejaVu Sans", sans-serif;
    letter-spacing: .1px;
    color: #222;
}
.prod-row {
    border-top: 1px solid #dedede;
    border-right: 1px solid #dedede;
    height: 29px;
}
.prod-row.first {
    height: 31px;
}
.prod-row.last {
    height: 26px;
    border-bottom: 1px solid #dedede;
}
.prod-row .field {
    padding-bottom: 1px;
}
.prod-row .field:not(.bad) {
    border-left: 0;
}
.prod-row .bad {
    width: calc(100% + 3px);
    margin-left: -3px;
}
.desc {
    width: 100%;
    height: 22px;
    border: 0;
    padding: 3px 10px;
    display: block;
    outline: none;
    border-radius: 0;
    resize: vertical;
}
.desc-cell {
    position: relative;
}
.desc-cell .desc {
    height: 25px;
    padding: 4px 10px;
}
.caret-line {
    position: absolute;
    left: 91px;
    top: 6px;
    width: 1px;
    height: 13px;
    background: #111;
}
.tax-box {
    margin-left: 13px;
}
.row-act {
    justify-self: center;
}
.row-extra {
    display: flex;
    align-items: center;
    gap: 8px;
    padding-left: 29px;
}
.notes-row {
    display: grid;
    grid-template-columns: 205px 206px 205px 194px;
    column-gap: 15px;
    padding: 4px 0 0 3px;
}
.note {
    position: relative;
    height: 86px;
}
.note textarea {
    width: 100%;
    height: 100%;
    border: 0;
    padding: 6px 10px;
    display: block;
    outline: none;
}
.note svg {
    position: absolute;
    top: 3px;
    right: 16px;
}
.tax-panel {
    height: 88px;
    background: #bfcad0;
    padding: 10px 9px 0 11px;
    display: grid;
    grid-template-columns: 82px 82px;
    grid-template-rows: 20px 29px 20px;
    column-gap: 10px;
    align-items: end;
    font: bold 9.500px "DejaVu Sans", sans-serif;
    color: #222;
}
.tax-panel label {
    padding-bottom: 6px;
}

/* payment */
.pay-panel {
    width: 296px;
    height: 265px;
    flex: none;
    background: #c6dbe3;
    padding: 0 16px 0 15px;
}
.pay-select {
    width: 265px;
    height: 20px;
    background: #fff;
    border: 1px solid #a06a70;
    border-left: 4px solid #f00;
    font: bold 9.500px "DejaVu Sans", sans-serif;
    color: #222;
    padding-left: 4px;
    border-radius: 0;
    display: block;
}
.totals {
    display: grid;
    grid-template-columns: 81px 163px;
    column-gap: 13px;
    row-gap: 5px;
    margin: 17px 0 0;
    align-items: start;
    font: bold 9.500px "DejaVu Sans", sans-serif;
    color: #222;
}
.totals label {
    text-align: right;
    line-height: 16px;
}
.totals .field {
    text-align: right;
}
.calc {
    background: #b0ccd7;
}
.strong {
    font-weight: bold;
}
.disc-pair {
    display: grid;
    grid-template-columns: 56px 44px 63px;
}
.disc-pair label {
    text-align: center;
    padding-left: 2px;
}
.pay-btns {
    display: flex;
    justify-content: flex-end;
    gap: 4px;
    margin: 13px 8px 0 0;
}
.pay-btns button {
    height: 26px;
    color: #fff;
    border-radius: 3px;
}
.place {
    width: 82px;
}
.btn-teal {
    width: 71px;
    background: linear-gradient(#30cfcb, #1ba9a6);
    border: 1px solid #22b5b2;
    padding: 0;
}
.page-scroll {
    position: absolute;
    right: 0;
    top: 0;
    bottom: 0;
    width: 11px;
    background: #f1f1f1;
}
.page-thumb {
    position: absolute;
    top: 86px;
    width: 100%;
    height: 401px;
    background: #c0c0c0;
}
.page-scroll .arrow-up {
    margin: 6px 3px 0;
}
.page-scroll .arrow-down {
    position: absolute;
    bottom: 11px;
    left: 3px;
}

/* bottom */
.copyright {
    height: 18px;
    flex: none;
    background: #fff;
    border-top: 1px solid #e0e0e0;
    padding-left: 104px;
    font: 9.500px/16px "DejaVu Sans", sans-serif;
    color: #676a6c;
}
.chat-bubble {
    position: absolute;
    left: 1216px;
    top: 624px;
    width: 50px;
    height: 51px;
    background: #dcac2a;
    border-radius: 25px 4px 25px 25px;
    display: flex;
    align-items: center;
    justify-content: center;
    box-shadow: 0 1px 4px rgba(0, 0, 0, .25);
}
.taskbar {
    height: 48px;
    flex: none;
    background: #17233a;
    display: flex;
    align-items: center;
    color: #f0f0f0;
    font-family: "Noto Sans", sans-serif;
}
.win-logo {
    margin-left: 233px;
}
.tb-search {
    width: 220px;
    height: 32px;
    margin-left: 13px;
    border-radius: 16px;
    background: #3a4557;
    display: flex;
    align-items: center;
    padding-left: 12px;
    gap: 10px;
    font-size: 14px;
}
.tb-cam {
    margin-left: auto;
    margin-right: 15px;
}
.tb-apps {
    display: flex;
    margin-left: 2px;
}
.app-slot {
    width: 44px;
    height: 40px;
    display: flex;
    align-items: center;
    justify-content: center;
    position: relative;
}
.app-slot.open::after, .app-slot.active::after {
    content: "";
    position: absolute;
    bottom: 0;
    left: 19px;
    width: 6px;
    height: 3px;
    border-radius: 2px;
    background: #9aa0a8;
}
.app-slot.active {
    background: #2a3346;
    border-radius: 5px;
}
.app-slot.active::after {
    left: 14px;
    width: 16px;
    background: #f07a5a;
}
.avatar {
    position: absolute;
    right: 6px;
    top: 3px;
}
.notif {
    position: absolute;
    right: 7px;
    top: 3px;
    width: 14px;
    height: 14px;
    border-radius: 50%;
    background: #e53935;
    font: normal 9px/14px "Noto Sans", sans-serif;
    text-align: center;
    color: #fff;
}
.skype-s {
    font: bold 15px "Noto Sans", sans-serif;
    fill: #fff;
}
.tray {
    margin-left: auto;
    display: flex;
    align-items: center;
    padding-right: 22px;
}
.t-up { margin-right: 17px; }
.t-cloud { margin-right: 14px; }
.t-sync { margin-right: 14px; }
.lang {
    width: 34px;
    text-align: center;
    font-size: 11.500px;
    line-height: 16px;
    margin-right: 13px;
}
.t-wifi { margin-right: 8px; }
.t-vol { margin-right: 9px; }
.t-bat { margin-right: 16px; }
.clock {
    text-align: right;
    font-size: 11.500px;
    line-height: 16px;
    margin-right: 9px;
    white-space: nowrap;
}
```
